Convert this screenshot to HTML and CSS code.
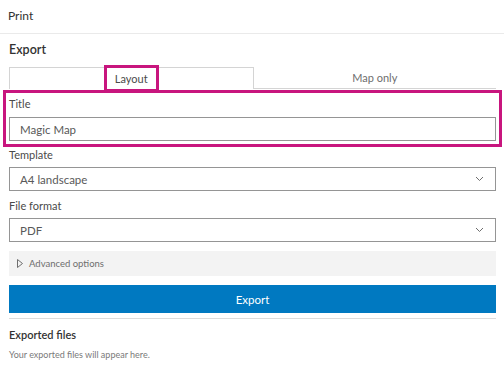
FILE: index.html
```html
<!DOCTYPE html>
<html lang="en">
<head>
  <meta charset="UTF-8">
  <title>Print</title>
  <link rel="stylesheet" href="styles.css">
</head>
<body>
  <!-- HEADER -->
  <div class="header">Print</div>

  <!-- PANEL -->
  <div class="panel">
    <h3 class="section-title">Export</h3>

    <div class="tabs">
      <div class="tab active"><span class="mark">Layout</span></div>
      <div class="tab">Map only</div>
    </div>

    <div class="field marked">
      <label for="title">Title</label>
      <input type="text" id="title" value="Magic Map">
    </div>

    <div class="field">
      <label>Template</label>
      <div class="select">
        <span>A4 landscape</span>
        <svg width="9" height="6" viewBox="0 0 9 6"><polyline points="1,1 4.5,4.5 8,1" fill="none" stroke="#6e6e6e" stroke-width="1"/></svg>
      </div>
    </div>

    <div class="field">
      <label>File format</label>
      <div class="select">
        <span>PDF</span>
        <svg width="9" height="6" viewBox="0 0 9 6"><polyline points="1,1 4.5,4.5 8,1" fill="none" stroke="#6e6e6e" stroke-width="1"/></svg>
      </div>
    </div>

    <div class="advanced">
      <svg width="6" height="9" viewBox="0 0 6 9"><polygon points="0.5,0.5 5.5,4.5 0.5,8.5" fill="none" stroke="#6e6e6e" stroke-width="1"/></svg>
      <span>Advanced options</span>
    </div>

    <button class="export-btn">Export</button>

    <div class="files">
      <h4>Exported files</h4>
      <p>Your exported files will appear here.</p>
    </div>
  </div>
</body>
</html>
```

FILE: styles.css
```css
* {
  margin: 0;
  padding: 0;
  box-sizing: border-box;
}

body {
  font-family: Lato, 'Open Sans', sans-serif;
  background: #fff;
  color: #323232;
  width: 504px;
  height: 375px;
  overflow: hidden;
}

/* HEADER */
.header {
  height: 34px;
  padding: 8px 8px 0;
  font-size: 12px;
  line-height: 15px;
  color: #323232;
  border-bottom: 1px solid #eaeaea;
}

.panel {
  padding: 0 8px 0 9px;
}

.section-title {
  font-size: 12.5px;
  font-weight: 600;
  line-height: 16px;
  margin-top: 8px;
  color: #323232;
}

/* TABS */
.tabs {
  display: flex;
  margin-top: 9px;
  height: 22px;
}

.tab {
  flex: 1;
  display: flex;
  justify-content: center;
  align-items: center;
  font-size: 11px;
  color: #6e6e6e;
  border-bottom: 1px solid #d4d4d4;
}

.tab.active {
  border: 1px solid #d4d4d4;
  border-bottom: none;
  color: #4a4a4a;
}

.mark {
  padding: 4px 8px 3px;
  line-height: 14px;
  outline: 3px solid #c8157e;
}

/* FIELDS */
.field.marked {
  margin-top: 7px;
  padding-top: 1px;
  outline: 3px solid #c8157e;
  outline-offset: 3px;
}

.field + .field {
  margin-top: 7px;
}

.field + .field + .field {
  margin-top: 8px;
}

label {
  display: block;
  font-size: 11px;
  line-height: 14px;
  color: #4a4a4a;
  margin-bottom: 5px;
}

.marked label {
  margin-bottom: 6px;
}

input, .select {
  width: 100%;
  height: 24px;
  border: 1px solid #959595;
  padding: 0 10px;
  font-family: inherit;
  font-size: 11.5px;
  color: #595959;
  background: #fff;
}

.select {
  display: flex;
  align-items: center;
  justify-content: space-between;
  padding-right: 11px;
}

.advanced {
  margin-top: 9px;
  height: 25px;
  background: #f3f3f3;
  display: flex;
  align-items: center;
  gap: 6px;
  padding-left: 8px;
  font-size: 9.5px;
  color: #6e6e6e;
}

.export-btn {
  display: block;
  width: 100%;
  height: 28px;
  margin-top: 9px;
  border: none;
  background: #0079c1;
  color: #fff;
  font-family: inherit;
  font-size: 11.5px;
}

.files {
  margin-top: 5px;
  border-top: 1px solid #dcdcdc;
  padding-top: 9px;
}

.files h4 {
  font-size: 11px;
  font-weight: 600;
  line-height: 14px;
  color: #323232;
}

.files p {
  margin-top: 7px;
  font-size: 9px;
  line-height: 11px;
  color: #7a7a7a;
}
```
